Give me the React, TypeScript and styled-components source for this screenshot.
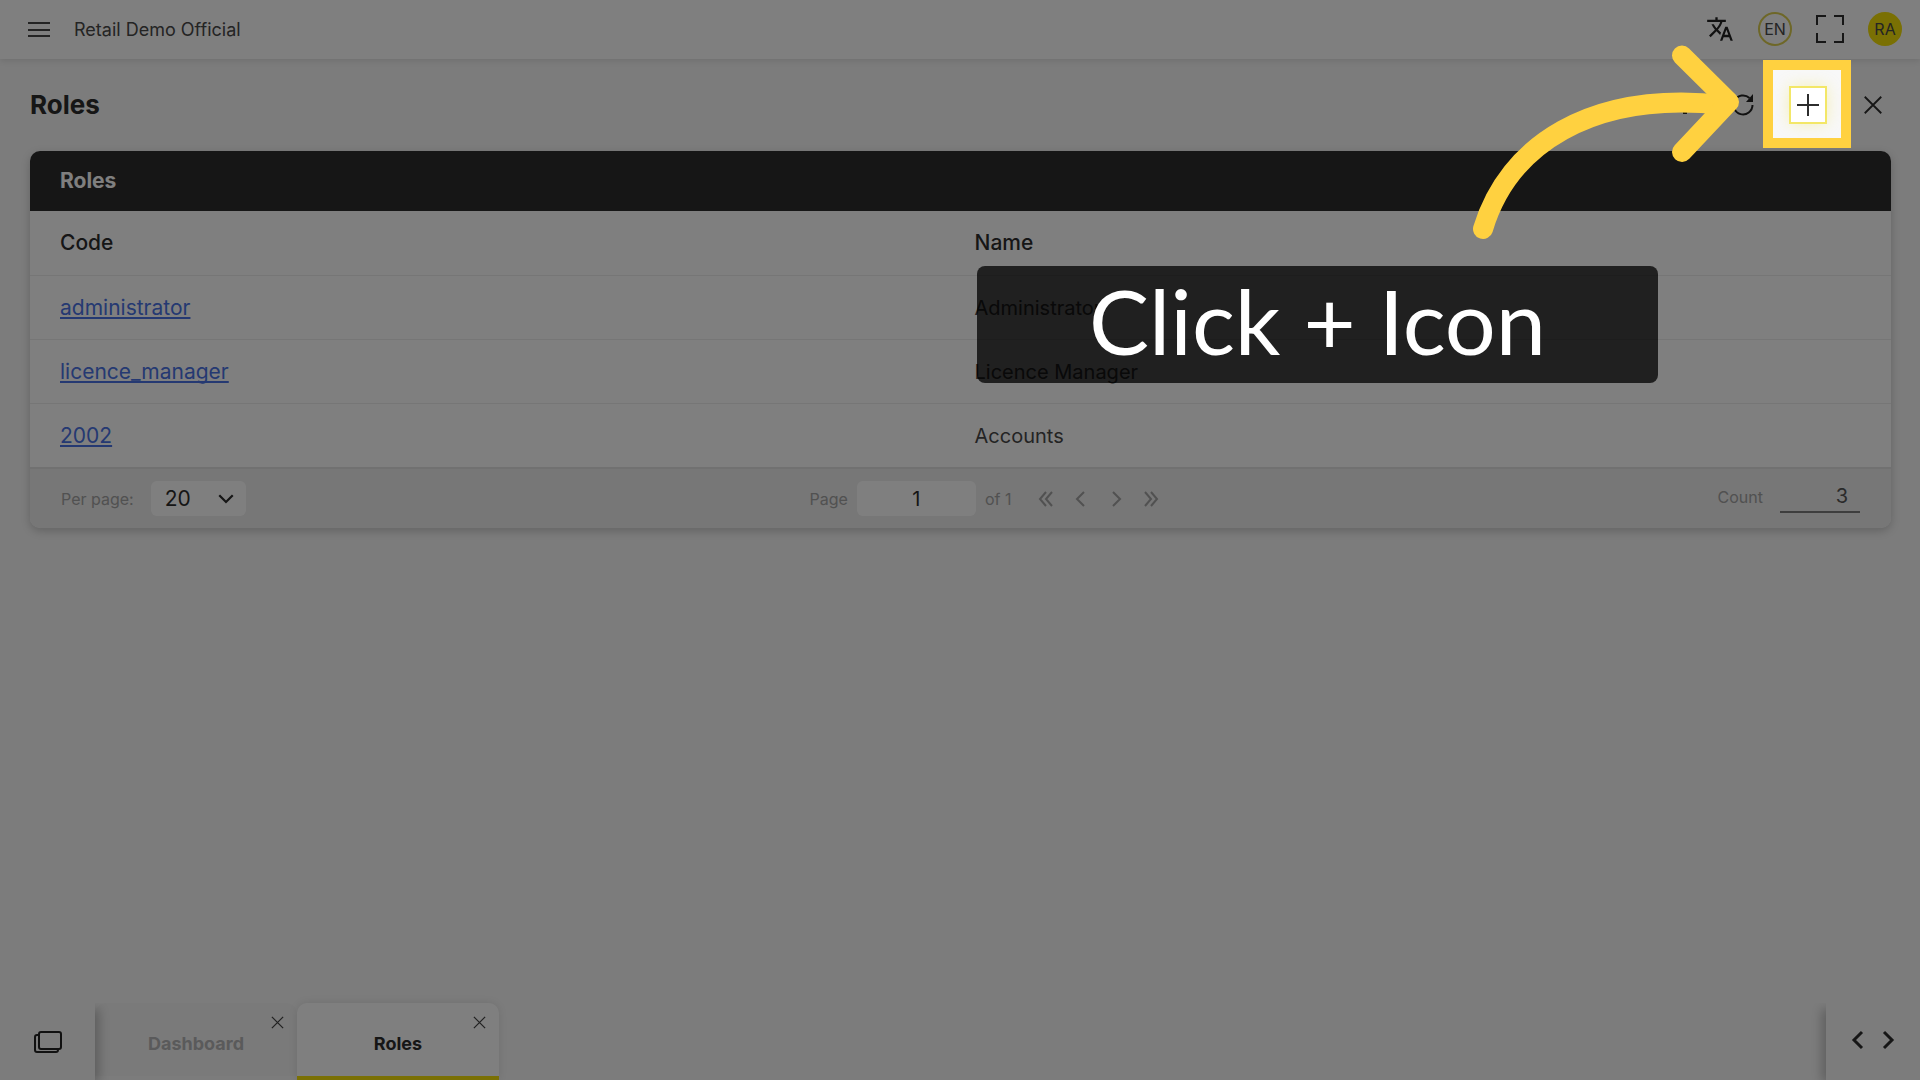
import React from "react";
import styled, { createGlobalStyle } from "styled-components";

const GlobalStyle = createGlobalStyle`
  *, *::before, *::after { box-sizing: border-box; }
  html { overflow-x: hidden; }
  body {
    margin: 0;
    background: #f8f8f8;
    color: #2d2d2d;
    font-family: Inter, "Noto Sans", sans-serif;
    font-size: 20px;
    line-height: 24px;
  }
  button, input, select { font: inherit; color: inherit; margin: 0; }
`;

const Shell = styled.div`
  min-height: 100vh;
  display: flex;
  flex-direction: column;
  overflow: hidden;
`;

const TopBar = styled.header`
  height: 59px;
  flex: none;
  display: flex;
  align-items: center;
  justify-content: space-between;
  padding: 0 18px 0 28px;
  background: #fff;
  box-shadow: 0 2px 6px rgba(0, 0, 0, 0.1);
`;

const Brand = styled.div`
  display: flex;
  align-items: center;
  gap: 24px;
  color: #484848;
  font-size: 18px;
`;

const TopActions = styled.div`
  display: flex;
  align-items: center;
  gap: 24px;
  padding-bottom: 1px;
`;

const IconButton = styled.button<{ $size?: number }>`
  width: ${(p) => p.$size ?? 24}px;
  height: ${(p) => p.$size ?? 24}px;
  padding: 0;
  border: 0;
  background: none;
  display: grid;
  place-items: center;
  flex: none;
  cursor: pointer;
`;

const Badge = styled.button<{ $filled?: boolean }>`
  width: 34px;
  height: 34px;
  padding: 0;
  flex: none;
  border-radius: 50%;
  border: 2px solid ${(p) => (p.$filled ? "#f4e008" : "#dccf50")};
  background: ${(p) => (p.$filled ? "#f4e008" : "transparent")};
  color: #484848;
  font-size: 16px;
  line-height: 28px;
  text-align: center;
  cursor: pointer;
`;

const Main = styled.main`
  flex: 1;
  padding: 0 29px 0 30px;
`;

const TitleRow = styled.div`
  height: 92px;
  display: flex;
  align-items: center;
  justify-content: space-between;
`;

const Title = styled.h1`
  margin: 0;
  font-size: 26px;
  line-height: 32px;
  font-weight: 700;
`;

const TitleActions = styled.div`
  display: flex;
  align-items: center;
  gap: 35px;
  padding-right: 7px;
`;

const Card = styled.section`
  border-radius: 10px;
  background: #fff;
  box-shadow: 0 3px 10px rgba(0, 0, 0, 0.2);
  overflow: hidden;
`;

const CardTitle = styled.h2`
  margin: 0;
  height: 60px;
  padding: 0 30px;
  background: #2d2d2d;
  color: #fff;
  font-size: 21px;
  line-height: 60px;
  font-weight: 700;
`;

const Table = styled.table`
  width: 100%;
  table-layout: fixed;
  border-collapse: separate;
  border-spacing: 0;

  th, td {
    height: 64px;
    padding: 0 14px;
    text-align: left;
    border-top: 1px solid #ececec;
  }
  td { color: #484848; }
  th { border-top: 0; font-size: 21px; font-weight: 500; }
  th:first-child, td:first-child { padding-left: 30px; }
`;

const CodeLink = styled.a`
  color: #4a73e4;
  font-size: 21px;
  text-decoration: underline;
  text-decoration-skip-ink: none;
  text-decoration-thickness: 2px;
  text-underline-offset: 2px;
`;

const Pager = styled.footer`
  height: 61px;
  display: grid;
  grid-template-columns: 1fr auto 1fr;
  align-items: center;
  padding: 0 31px;
  background: #eeeeee;
  border-top: 2px solid #e2e2e2;
  color: #a2a2a2;
  font-size: 16px;
`;

const PagerGroup = styled.div<{ $gap: number }>`
  display: flex;
  align-items: center;
  gap: ${(p) => p.$gap}px;
`;

const PageGroup = styled(PagerGroup)`
  margin-left: 52px;
`;

const CountGroup = styled(PagerGroup)`
  justify-content: flex-end;
  padding-bottom: 4px;
`;

const SelectBox = styled.div`
  display: grid;
  grid-template-columns: 1fr 40px;
  align-items: center;
  width: 95px;
  height: 35px;
  border-radius: 6px;
  background: #fff;
  color: #2d2d2d;

  select {
    grid-area: 1 / 1 / 2 / 3;
    height: 35px;
    padding: 0 14px;
    border: 0;
    background: none;
    appearance: none;
    font-size: 21px;
  }
  svg { grid-area: 1 / 2 / 2 / 3; pointer-events: none; justify-self: center; }
`;

const PageInput = styled.input`
  width: 119px;
  height: 35px;
  border: 0;
  border-radius: 6px;
  background: #fff;
  color: #2d2d2d;
  font-size: 20px;
  text-align: center;
`;

const PageSteps = styled.div`
  display: flex;
  gap: 11px;
  padding-left: 14px;
`;

const CountInput = styled.input`
  width: 80px;
  height: 32px;
  padding: 0 12px;
  border: 0;
  border-bottom: 2px solid #7c7c7c;
  background: none;
  color: #555;
  font-size: 20px;
  text-align: right;
`;

const TabBar = styled.nav`
  height: 77px;
  flex: none;
  display: flex;
  align-items: stretch;
`;

const TabEdge = styled.div<{ $side: "left" | "right" }>`
  flex: none;
  width: ${(p) => (p.$side === "left" ? 95 : 94)}px;
  display: flex;
  align-items: center;
  justify-content: center;
  gap: 6px;
  padding-bottom: ${(p) => (p.$side === "left" ? 0 : 4)}px;
  background: #f8f8f8;
  box-shadow: ${(p) => (p.$side === "left" ? "6px" : "-6px")} 4px 10px -2px rgba(0, 0, 0, 0.24);
  clip-path: ${(p) => (p.$side === "left" ? "inset(0 -20px 0 0)" : "inset(0 0 0 -20px)")};
`;

const Tabs = styled.div`
  flex: 1;
  display: flex;
`;

const Tab = styled.div<{ $active?: boolean }>`
  width: 202px;
  display: grid;
  grid-template-rows: 27px 1fr;
  padding: 4px 10px 0;
  border-radius: 10px 10px 0 0;
  border-bottom: ${(p) => (p.$active ? "4px solid #f4e008" : "4px solid transparent")};
  background: ${(p) => (p.$active ? "#fff" : "#f4f4f4")};
  background-clip: padding-box;
  box-shadow: ${(p) => (p.$active ? "0 0 8px rgba(0, 0, 0, 0.1)" : "none")};
  color: ${(p) => (p.$active ? "#2d2d2d" : "#b4b4b6")};
`;

const TabClose = styled(IconButton)`
  justify-self: end;
  align-self: end;
  width: 20px;
  color: #444;
`;

const TabLabel = styled.button`
  align-self: start;
  height: 20px;
  padding: 0;
  border: 0;
  background: none;
  font-size: 18px;
  line-height: 20px;
  font-weight: 700;
  cursor: pointer;
`;

const AddAnchor = styled.div`
  position: relative;
  width: 38px;
  height: 38px;
`;

const AddButton = styled.button`
  width: 38px;
  height: 38px;
  padding: 0;
  display: grid;
  place-items: center;
  border: 2px solid #f3e767;
  background: #fff;
  box-shadow: 0 0 16px rgba(244, 224, 8, 0.25);
  cursor: pointer;
`;

/* Dims the whole page except the square around the add button. */
const Spotlight = styled.div`
  position: absolute;
  inset: -26px -24px -24px -26px;
  z-index: 10;
  border: 10px solid #ffd140;
  box-shadow: 0 0 0 4000px rgba(0, 0, 0, 0.5);
  pointer-events: none;
`;

const Arrow = styled.svg`
  position: absolute;
  z-index: 11;
  right: 85px;
  top: -45px;
  width: 270px;
  height: 200px;
  pointer-events: none;
`;

const Hint = styled.div`
  position: absolute;
  z-index: 11;
  right: 169px;
  top: 180px;
  width: 681px;
  padding-bottom: 9px;
  border-radius: 8px;
  background: rgba(0, 0, 0, 0.75);
  color: #fff;
  font-family: Lato, sans-serif;
  font-size: 90px;
  line-height: 108px;
  text-align: center;
  white-space: nowrap;
`;

type IconProps = { d: string; size: number; box?: number; width?: number };

const Icon = ({ d, size, box = 24, width = 2 }: IconProps) => (
  <svg width={size} height={size} viewBox={`0 0 ${box} ${box}`} fill="none"
    stroke="currentColor" strokeWidth={width} aria-hidden="true">
    <path d={d} />
  </svg>
);

const CLOSE = "M3 3 21 21M21 3 3 21";

const roles = [
  { code: "administrator", name: "Administrator" },
  { code: "licence_manager", name: "Licence Manager" },
  { code: "2002", name: "Accounts" },
];

const steps = [
  { label: "First page", d: "M12 5 6 12l6 7M18 5l-6 7 6 7" },
  { label: "Previous page", d: "M15 5 8 12l7 7" },
  { label: "Next page", d: "M9 5l7 7-7 7" },
  { label: "Last page", d: "M6 5l6 7-6 7M12 5l6 7-6 7" },
];

export default function App() {
  return (
    <>
      <GlobalStyle />
      <Shell>
        <TopBar>
          <Brand>
            <IconButton $size={22} aria-label="Menu">
              <Icon size={22} box={22} width={2} d="M0 4h22M0 11h22M0 17h22" />
            </IconButton>
            <span>Retail Demo Official</span>
          </Brand>
          <TopActions>
            <IconButton $size={28} aria-label="Translate">
              <svg width="28" height="28" viewBox="0 0 24 24" fill="#222" aria-hidden="true">
                <path d="m12.87 15.07-2.54-2.51.03-.03c1.74-1.94 2.98-4.17 3.71-6.53H17V4h-7V2H8v2H1v1.99h11.17C11.5 7.92 10.44 9.75 9 11.35 8.07 10.32 7.3 9.19 6.69 8h-2c.73 1.63 1.73 3.17 2.98 4.56l-5.09 5.02L4 19l5-5 3.11 3.11.76-2.04zM18.5 10h-2L12 22h2l1.12-3h4.75L21 22h2l-4.500-12zm-2.62 7 1.62-4.33L19.12 17h-3.24z" />
              </svg>
            </IconButton>
            <Badge aria-label="Language EN">EN</Badge>
            <IconButton $size={28} aria-label="Full screen">
              <Icon size={28} box={28} width={2} d="M1 10V1h9M18 1h9v9M27 18v9h-9M10 27H1v-9" />
            </IconButton>
            <Badge $filled aria-label="Account RA">RA</Badge>
          </TopActions>
        </TopBar>

        <Main>
          <TitleRow>
            <Title>Roles</Title>
            <TitleActions>
              <IconButton $size={22} aria-label="More">
                <Icon size={22} box={22} width={4} d="M8 4h4M8 11h4M8 18h4" />
              </IconButton>
              <IconButton $size={22} aria-label="Refresh">
                <svg width="22" height="22" viewBox="0 0 22 22" fill="none" stroke="#222" strokeWidth="2" aria-hidden="true">
                  <path d="M20.500 11A9.500 9.500 0 1 1 17.500 4" />
                  <path d="M21 0v8h-7z" fill="#222" stroke="none" />
                </svg>
              </IconButton>
              <AddAnchor>
                <AddButton aria-label="Add role">
                  <Icon size={22} box={22} width={2} d="M11 0v22M0 11h22" />
                </AddButton>
                <Spotlight />
                <Arrow viewBox="1472 41 270 200" fill="none" stroke="#ffd140" strokeWidth="20"
                  strokeLinecap="round" strokeLinejoin="round" aria-hidden="true">
                  <path d="M1483 229C1508 146 1590 90 1724 105" />
                  <path d="M1682 55.500 1729 102 1682 152" />
                </Arrow>
                <Hint role="status">Click + Icon</Hint>
              </AddAnchor>
              <IconButton $size={22} aria-label="Close">
                <Icon size={22} d={CLOSE} />
              </IconButton>
            </TitleActions>
          </TitleRow>

          <Card>
            <CardTitle>Roles</CardTitle>
            <Table>
              <thead>
                <tr><th scope="col">Code</th><th scope="col">Name</th></tr>
              </thead>
              <tbody>
                {roles.map((r) => (
                  <tr key={r.code}>
                    <td><CodeLink href="#">{r.code}</CodeLink></td>
                    <td>{r.name}</td>
                  </tr>
                ))}
              </tbody>
            </Table>
            <Pager>
              <PagerGroup $gap={17}>
                <label htmlFor="per-page">Per page:</label>
                <SelectBox>
                  <select id="per-page" defaultValue="20">
                    <option>10</option>
                    <option>20</option>
                    <option>50</option>
                  </select>
                  <Icon size={18} width={3} d="M3 7l9 9 9-9" />
                </SelectBox>
              </PagerGroup>
              <PageGroup $gap={9}>
                <label htmlFor="page">Page</label>
                <PageInput id="page" defaultValue="1" />
                <span>of 1</span>
                <PageSteps>
                  {steps.map((s) => (
                    <IconButton key={s.label} aria-label={s.label}>
                      <Icon size={24} width={2} d={s.d} />
                    </IconButton>
                  ))}
                </PageSteps>
              </PageGroup>
              <CountGroup $gap={17}>
                <label htmlFor="count">Count</label>
                <CountInput id="count" defaultValue="3" readOnly />
              </CountGroup>
            </Pager>
          </Card>
        </Main>

        <TabBar aria-label="Open pages">
          <TabEdge $side="left">
            <IconButton $size={28} aria-label="All windows">
              <svg width="28" height="24" viewBox="0 0 28 24" fill="none" stroke="#222" strokeWidth="2" aria-hidden="true">
                <rect x="5" y="2" width="22" height="17" rx="2" />
                <path d="M5 5H3a2 2 0 0 0-2 2v13a2 2 0 0 0 2 2h19a2 2 0 0 0 2-2v-1" />
              </svg>
            </IconButton>
          </TabEdge>
          <Tabs>
            <Tab>
              <TabClose aria-label="Close Dashboard"><Icon size={15} width={2} d={CLOSE} /></TabClose>
              <TabLabel>Dashboard</TabLabel>
            </Tab>
            <Tab $active>
              <TabClose aria-label="Close Roles"><Icon size={15} width={2} d={CLOSE} /></TabClose>
              <TabLabel>Roles</TabLabel>
            </Tab>
          </Tabs>
          <TabEdge $side="right">
            <IconButton aria-label="Scroll tabs left"><Icon size={24} width={3} d="M16 4 8 12l8 8" /></IconButton>
            <IconButton aria-label="Scroll tabs right"><Icon size={24} width={3} d="M8 4l8 8-8 8" /></IconButton>
          </TabEdge>
        </TabBar>
      </Shell>
    </>
  );
}
